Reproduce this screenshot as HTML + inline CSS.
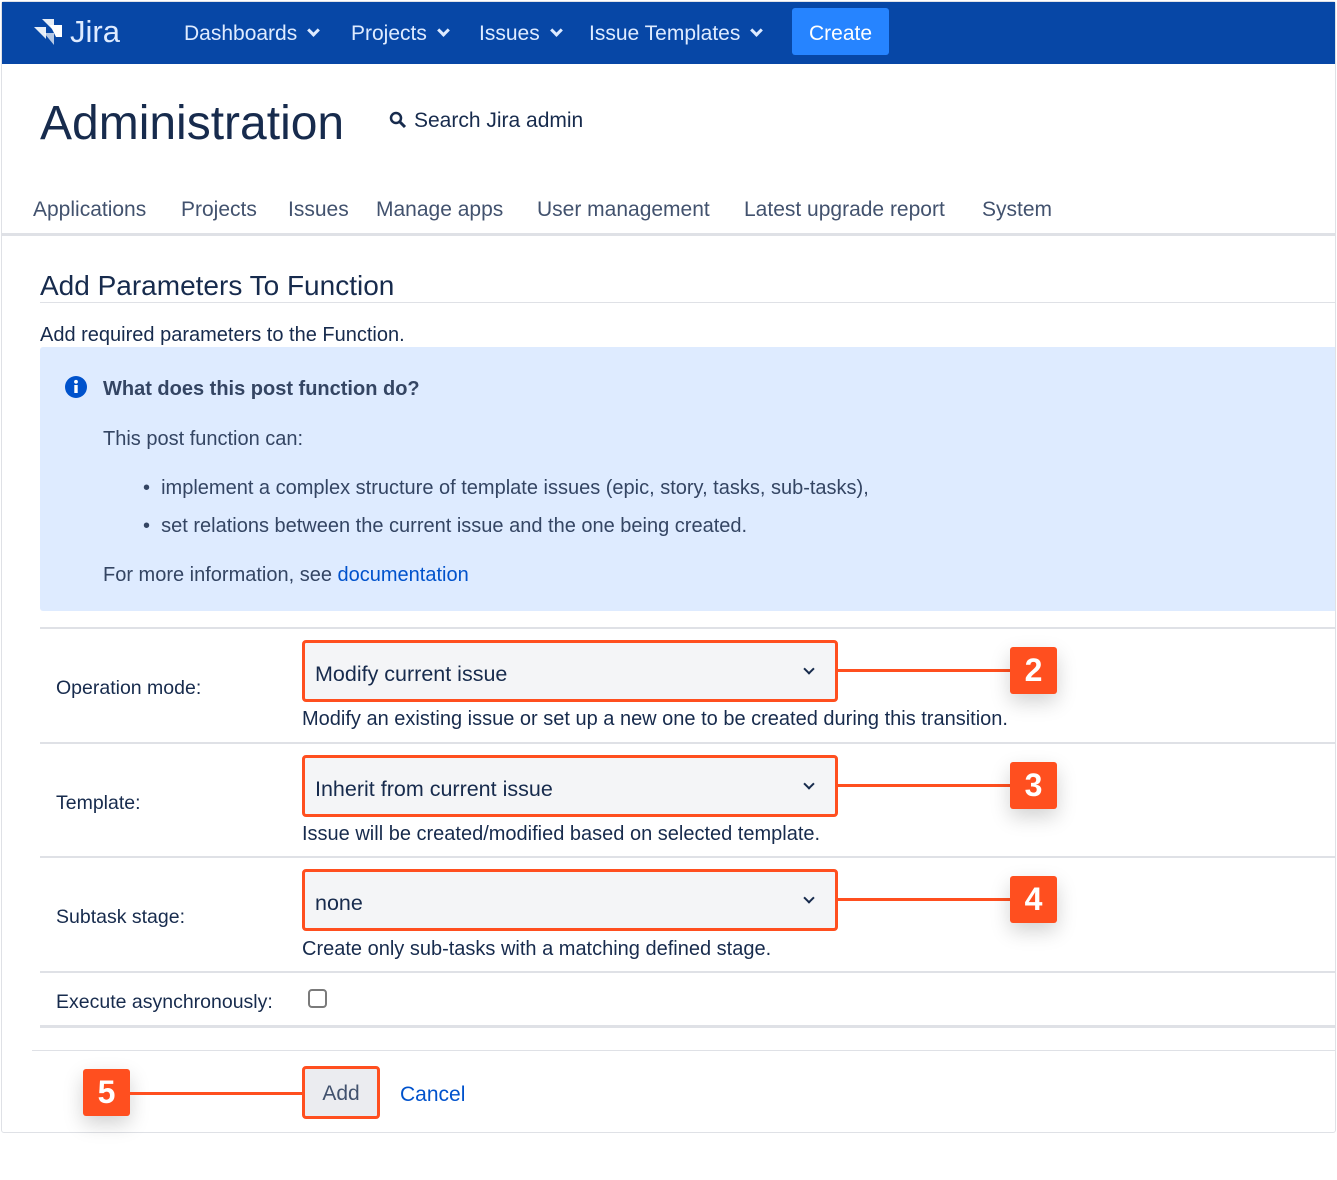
<!DOCTYPE html>
<html><head><meta charset="utf-8"><style>
*{margin:0;padding:0;box-sizing:border-box}
body{width:1337px;height:1180px;background:#fff;font-family:"Liberation Sans",sans-serif;color:#172b4d;position:relative;overflow:hidden}
.a{position:absolute;white-space:nowrap}
.frame{position:absolute;left:1px;top:1px;width:1335px;height:1132px;border:1px solid #dfe1e6;border-radius:3px}
.nav{position:absolute;left:2px;top:2px;width:1333px;height:62px;background:#0747a6}
.nv{color:#deebff;font-size:21px;top:22px}
.chev{display:inline-block;width:9px;height:9px;border-right:3px solid #deebff;border-bottom:3px solid #deebff;transform:rotate(45deg);margin-left:12px;position:relative;top:-5px}
.tab{font-size:21px;color:#42526e;top:198px}
.hr{position:absolute;height:2px;background:#dfe1e6}
.lbl{font-size:19.5px;color:#172b4d}
.sel{position:absolute;left:302px;width:536px;height:62px;border:3px solid #ff4f1f;border-radius:4px;background:#f4f5f7;font-size:21.5px;padding:19px 10px;color:#172b4d}
.sel:after{content:"";position:absolute;right:22px;top:22px;width:6px;height:6px;border-right:2.5px solid #172b4d;border-bottom:2.5px solid #172b4d;transform:rotate(45deg)}
.line{position:absolute;height:3px;background:#ff4f1f}
.badge{position:absolute;width:47px;height:47px;background:#ff4f1f;color:#fff;font-weight:bold;font-size:32px;text-align:center;line-height:47px;border-radius:3px;box-shadow:0 8px 20px rgba(0,0,0,.18)}
.desc{font-size:20px;color:#172b4d}
.ib{font-size:20px;color:#344563}
</style></head><body>
<div class="frame"></div>
<div class="nav"></div>
<svg class="a" style="left:32px;top:17px" width="34" height="30" viewBox="0 0 34 30"><g fill="#fff"><path d="M10 2h12v12z" opacity=".9"/><path d="M2 10h12v12z" opacity=".9"/><path d="M18 8h12v12h-6z"/><path d="M12 16h10v12z" opacity=".7"/></g></svg>
<div class="a" style="left:70px;top:14px;font-size:31px;color:#deebff">Jira</div>
<div class="a nv" style="left:184px">Dashboards<span class="chev"></span></div>
<div class="a nv" style="left:351px">Projects<span class="chev"></span></div>
<div class="a nv" style="left:479px">Issues<span class="chev"></span></div>
<div class="a nv" style="left:589px">Issue Templates<span class="chev"></span></div>
<div class="a" style="left:792px;top:8px;width:97px;height:47px;background:#2684ff;border-radius:3px;color:#fff;font-size:21px;text-align:center;line-height:51px">Create</div>
<div class="a" style="left:40px;top:96px;font-size:48px;color:#172b4d">Administration</div>
<svg class="a" style="left:389px;top:111px" width="18" height="18" viewBox="0 0 18 18"><circle cx="7" cy="7" r="5" fill="none" stroke="#172b4d" stroke-width="2.5"/><path d="M11 11l5 5" stroke="#172b4d" stroke-width="3"/></svg>
<div class="a" style="left:414px;top:109px;font-size:21px;color:#172b4d">Search Jira admin</div>
<div class="a tab" style="left:33px">Applications</div>
<div class="a tab" style="left:181px">Projects</div>
<div class="a tab" style="left:288px">Issues</div>
<div class="a tab" style="left:376px">Manage apps</div>
<div class="a tab" style="left:537px">User management</div>
<div class="a tab" style="left:744px">Latest upgrade report</div>
<div class="a tab" style="left:982px">System</div>
<div class="hr" style="left:2px;top:233px;width:1333px;height:3px"></div>
<div class="a" style="left:40px;top:270px;font-size:28px;color:#172b4d">Add Parameters To Function</div>
<div class="hr" style="left:40px;top:302px;width:1295px;height:1px"></div>
<div class="a" style="left:40px;top:324px;font-size:20px">Add required parameters to the Function.</div>
<div class="a" style="left:40px;top:347px;width:1295px;height:264px;background:#deebff;border-radius:3px 0 0 3px"></div>
<svg class="a" style="left:65px;top:376px" width="22" height="22" viewBox="0 0 22 22"><circle cx="11" cy="11" r="11" fill="#0052cc"/><rect x="9.3" y="9" width="3.4" height="8" fill="#fff"/><circle cx="11" cy="5.8" r="1.9" fill="#fff"/></svg>
<div class="a ib" style="left:103px;top:378px;font-weight:bold">What does this post function do?</div>
<div class="a ib" style="left:103px;top:428px">This post function can:</div>
<div class="a ib" style="left:143px;top:477px">•&nbsp;&nbsp;implement a complex structure of template issues (epic, story, tasks, sub-tasks),</div>
<div class="a ib" style="left:143px;top:515px">•&nbsp;&nbsp;set relations between the current issue and the one being created.</div>
<div class="a ib" style="left:103px;top:564px">For more information, see <span style="color:#0052cc">documentation</span></div>
<div class="hr" style="left:40px;top:627px;width:1295px"></div>
<div class="a lbl" style="left:56px;top:677px">Operation mode:</div>
<div class="sel" style="top:640px">Modify current issue</div>
<div class="line" style="left:838px;top:669px;width:172px"></div>
<div class="badge" style="left:1010px;top:647px">2</div>
<div class="a desc" style="left:302px;top:708px">Modify an existing issue or set up a new one to be created during this transition.</div>
<div class="hr" style="left:40px;top:742px;width:1295px"></div>
<div class="a lbl" style="left:56px;top:792px">Template:</div>
<div class="sel" style="top:755px">Inherit from current issue</div>
<div class="line" style="left:838px;top:784px;width:172px"></div>
<div class="badge" style="left:1010px;top:762px">3</div>
<div class="a desc" style="left:302px;top:823px">Issue will be created/modified based on selected template.</div>
<div class="hr" style="left:40px;top:856px;width:1295px"></div>
<div class="a lbl" style="left:56px;top:906px">Subtask stage:</div>
<div class="sel" style="top:869px">none</div>
<div class="line" style="left:838px;top:898px;width:172px"></div>
<div class="badge" style="left:1010px;top:876px">4</div>
<div class="a desc" style="left:302px;top:938px">Create only sub-tasks with a matching defined stage.</div>
<div class="hr" style="left:40px;top:971px;width:1295px"></div>
<div class="a lbl" style="left:56px;top:991px">Execute asynchronously:</div>
<div class="a" style="left:308px;top:989px;width:19px;height:19px;border:2px solid #7a7a7a;border-radius:4px"></div>
<div class="hr" style="left:40px;top:1025px;width:1295px;height:3px"></div>
<div class="hr" style="left:32px;top:1050px;width:1303px;height:1px"></div>
<div class="badge" style="left:83px;top:1069px">5</div>
<div class="line" style="left:130px;top:1092px;width:172px"></div>
<div class="a" style="left:302px;top:1066px;width:78px;height:53px;border:3px solid #ff4f1f;border-radius:4px;background:#ebecf0;font-size:21px;text-align:center;line-height:50px;color:#42526e">Add</div>
<div class="a" style="left:400px;top:1083px;font-size:21px;color:#0052cc">Cancel</div>
</body></html>
